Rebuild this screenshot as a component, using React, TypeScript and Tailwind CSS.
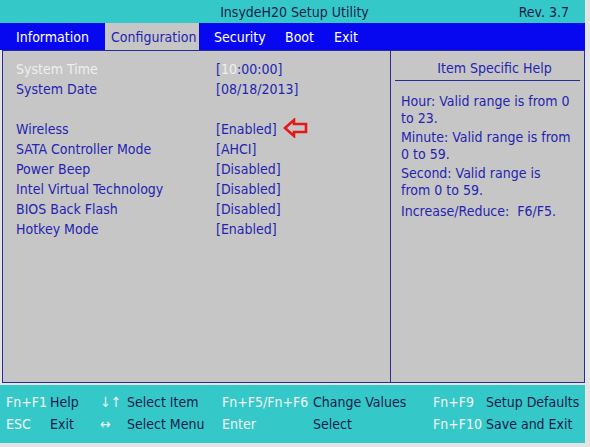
const font = { fontFamily: '"DejaVu Sans Condensed", "DejaVu Sans", sans-serif' }

const tabs = [
  { name: 'Information', cls: 'w-[97px] pl-[8px]' },
  { name: 'Configuration', cls: 'w-[94px] pl-[6px] bg-[#c6c6c6] text-[#2424b0]' },
  { name: 'Security', cls: 'w-[71px] pl-[15px]' },
  { name: 'Boot', cls: 'w-[49px] pl-[15px]' },
  { name: 'Exit', cls: 'w-[60px] pl-[15px]' },
]

const rows = [
  { label: 'Wireless', value: '[Enabled]' },
  { label: 'SATA Controller Mode', value: '[AHCI]' },
  { label: 'Power Beep', value: '[Disabled]' },
  { label: 'Intel Virtual Technology', value: '[Disabled]' },
  { label: 'BIOS Back Flash', value: '[Disabled]' },
  { label: 'Hotkey Mode', value: '[Enabled]' },
]

// help text, broken the same way the BIOS screen wraps it
const help = [
  ['Hour: Valid range is from 0', 'to 23.'],
  ['Minute: Valid range is from', '0 to 59.'],
  ['Second: Valid range is', 'from 0 to 59.'],
  ['Increase/Reduce:\u00a0 F6/F5.'],
]

const footer = [
  ['Fn+F1', 'Help', '↓↑', 'Select Item', 'Fn+F5/Fn+F6', 'Change Values', 'Fn+F9', 'Setup Defaults'],
  ['ESC', 'Exit', '↔', 'Select Menu', 'Enter', 'Select', 'Fn+F10', 'Save and Exit'],
]
const colW = ['w-[44px]', 'w-[50px]', 'w-[27px]', 'w-[95px]', 'w-[91px]', 'w-[120px]', 'w-[53px]', '']

function Arrow() {
  return (
    <svg width="26" height="20" viewBox="0 0 26 20" className="ml-[6px] -mt-[3px]">
      <path d="M2 10 L11 2 L11 6 L23 6 L23 14 L11 14 L11 18 Z" fill="none" stroke="#e41818" strokeWidth="2.6" strokeLinejoin="miter" />
    </svg>
  )
}

export default function App() {
  return (
    <div className="w-[590px] h-[447px] bg-[#e4e4e4] overflow-hidden text-[14px] leading-none" style={font}>
      <div className="w-[585px] flex flex-col">
        {/* title */}
        <div className="h-[23px] bg-[#35c8c8] relative flex items-center justify-center text-[#1c1c4c]">
          <span className="ml-[4px]">InsydeH20 Setup Utility</span>
          <span className="absolute right-[16px] top-[5px]">Rev. 3.7</span>
        </div>

        {/* menu */}
        <div className="h-[27px] bg-[#0808f0] flex items-stretch pl-[8px] text-white">
          {tabs.map((t) => (
            <div key={t.name} className={'flex items-center ' + t.cls}>
              {t.name}
            </div>
          ))}
        </div>

        {/* main */}
        <div className="h-[333px] ml-[2px] bg-[#c6c6c6] border-t border-l border-b border-[#2a2a98] flex">
          <div className="flex-1 pt-[8px] pl-[13px] text-[#2424b0]">
            <div className="h-[20px] flex items-center">
              <span className="w-[200px] text-[#efefef]">System Time</span>
              <span>
                [<span className="text-[#efefef]">10</span>:00:00]
              </span>
            </div>
            <div className="h-[20px] flex items-center">
              <span className="w-[200px]">System Date</span>
              <span>[08/18/2013]</span>
            </div>
            <div className="h-[20px]" />
            {rows.map((r, i) => (
              <div key={r.label} className="h-[20px] flex items-center">
                <span className="w-[200px]">{r.label}</span>
                <span>{r.value}</span>
                {i === 0 && <Arrow />}
              </div>
            ))}
          </div>

          <div className="w-[195px] border-l border-r border-[#2a2a98] px-[4px] text-[#2424b0]">
            <div className="h-[30px] flex items-center justify-center pt-[4px] pl-[14px] border-b border-[#2a2a98]">
              Item Specific Help
            </div>
            <div className="pl-[6px] pt-[12px] leading-[17px] whitespace-nowrap">
              {help.map((p, i) => (
                <p key={i} className={i === 0 ? '' : i === 3 ? 'mt-[4px]' : 'mt-[2px]'}>
                  {p.map((line) => (
                    <span key={line} className="block">
                      {line}
                    </span>
                  ))}
                </p>
              ))}
            </div>
          </div>
        </div>

        {/* footer */}
        <div className="h-[58px] mt-[2px] bg-[#35c8c8] flex flex-col gap-[6px] pt-[9px] pl-[6px]">
          {footer.map((row, i) => (
            <div key={i} className="flex h-[16px] items-center">
              {row.map((c, j) => (
                <span key={j} className={(j % 2 === 0 ? 'text-[#f2f2f2] ' : 'text-[#1c1c4c] ') + colW[j]}>
                  {c}
                </span>
              ))}
            </div>
          ))}
        </div>
      </div>
    </div>
  )
}
